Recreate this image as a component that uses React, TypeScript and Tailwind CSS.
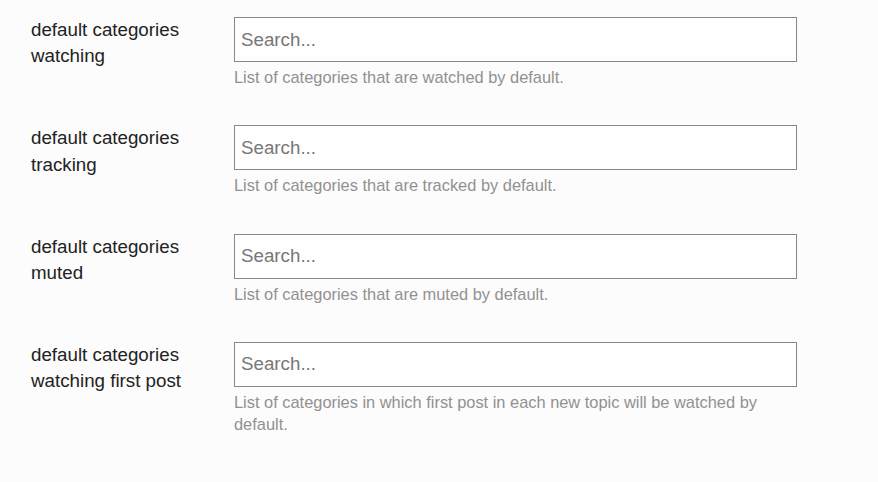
const settings = [
  {
    label: "default categories watching",
    help: "List of categories that are watched by default.",
  },
  {
    label: "default categories tracking",
    help: "List of categories that are tracked by default.",
  },
  {
    label: "default categories muted",
    help: "List of categories that are muted by default.",
  },
  {
    label: "default categories watching first post",
    help: "List of categories in which first post in each new topic will be watched by default.",
  },
];

const App = () => {
  return (
    <div className="min-h-screen bg-[#fcfcfc] pt-[17px] font-['Liberation_Sans',Arial,sans-serif]">
      <div className="flex flex-col gap-[37.3px]">
        {settings.map((s) => (
          <div key={s.label} className="flex">
            {/* label */}
            <div className="w-[234px] shrink-0 pl-[31px] pr-[30px] text-[18.75px] leading-[26.25px] text-[#222]">
              {s.label}
            </div>

            {/* input + description */}
            <div className="w-[563px]">
              <input
                type="text"
                placeholder="Search..."
                className="block h-[45px] w-full border border-[#888] bg-[#fefefe] px-[6px] text-[18.75px] text-[#222] outline-none placeholder:text-[#777]"
              />
              <div className="mt-[4px] pr-[20px] text-[16.4px] leading-[22px] text-[#919191]">
                {s.help}
              </div>
            </div>
          </div>
        ))}
      </div>
    </div>
  );
};

export default App;
